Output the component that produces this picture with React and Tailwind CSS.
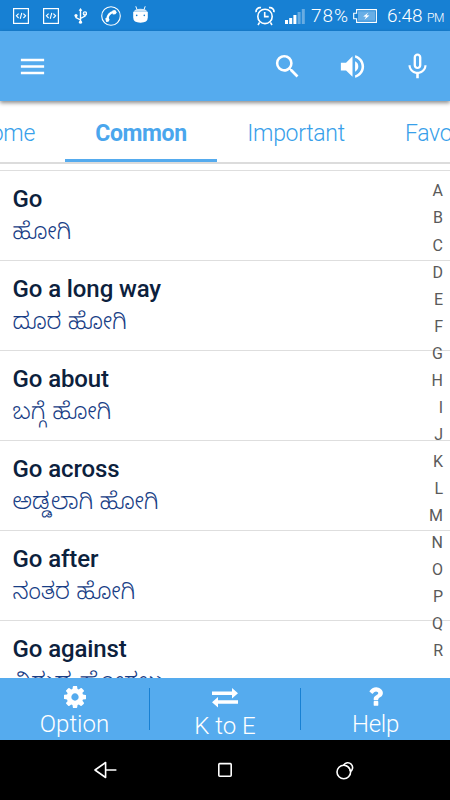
import { MdMenu, MdSearch, MdVolumeUp, MdMicNone } from 'react-icons/md'

const PHRASES = [
  { en: 'Go', kn: 'ಹೋಗಿ' },
  { en: 'Go a long way', kn: 'ದೂರ ಹೋಗಿ' },
  { en: 'Go about', kn: 'ಬಗ್ಗೆ ಹೋಗಿ' },
  { en: 'Go across', kn: 'ಅಡ್ಡಲಾಗಿ ಹೋಗಿ' },
  { en: 'Go after', kn: 'ನಂತರ ಹೋಗಿ' },
  { en: 'Go against', kn: 'ವಿರುದ್ಧ ಹೋಗಲು' },
]

const LETTERS = 'ABCDEFGHIJKLMNOPQR'.split('')

function CodeIcon({ className }) {
  return (
    <svg className={className} width="16" height="16" viewBox="0 0 16 16" fill="none" stroke="currentColor">
      <rect x="0.6" y="0.6" width="14.8" height="14.8" strokeWidth="1.2" />
      <path d="M5.6 5.6 3.4 7.8l2.2 2.2M10.4 5.6l2.2 2.2-2.2 2.2M8.8 4.8 7.2 10.8" strokeWidth="1.1" />
    </svg>
  )
}

function UsbIcon({ className }) {
  return (
    <svg className={className} width="13" height="16" viewBox="0 0 13 16" fill="none" stroke="currentColor" strokeWidth="1.4">
      <path d="M6.5 2v12M6.5 12 2 9.5V7.5M6.5 10.5 11 8V5.5" />
      <circle cx="2" cy="7.6" r="1.6" fill="currentColor" stroke="none" />
      <circle cx="10.9" cy="5.6" r="1.7" strokeWidth="1.1" />
      <circle cx="6.5" cy="14.2" r="1.6" fill="currentColor" stroke="none" />
      <path d="M6.5 0 8.4 2.8H4.6z" fill="currentColor" stroke="none" />
    </svg>
  )
}

function CallIcon({ className }) {
  return (
    <svg className={className} width="20" height="20" viewBox="0 0 20 20" fill="none" stroke="currentColor">
      <circle cx="10" cy="10" r="9.3" strokeWidth="1.1" />
      <path d="M6.2 13.8Q6.5 7.2 13 5.9" strokeWidth="2.2" />
      <path d="M4.2 12.4l3-1.4 1.4 2.7-1.2 2.1-2.2.1zM11.4 4.4l2.8-.3 1.6 2.3-1.4 1.8-2.6.4z" fill="currentColor" stroke="none" />
    </svg>
  )
}

function AndroidIcon({ className }) {
  return (
    <svg className={className} width="15" height="17" viewBox="0 0 15 17">
      <path d="M2.8.3 4 3.6M12.2.3 11 3.6" stroke="currentColor" strokeWidth="1" fill="none" />
      <path d="M.8 5.8Q1.6 2.8 7.5 2.8T14.2 5.8z" fill="currentColor" opacity=".8" />
      <path d="M.2 5.8h14.6v5.8q0 5.2-7.3 5.2T.2 11.6z" fill="currentColor" />
      <circle cx="3.7" cy="9.4" r=".8" fill="#1780d3" />
      <circle cx="11.3" cy="9.4" r=".8" fill="#1780d3" />
    </svg>
  )
}

function AlarmIcon({ className }) {
  return (
    <svg className={className} width="20" height="20" viewBox="0 0 20 20" fill="none" stroke="currentColor" strokeWidth="1.6">
      <circle cx="10" cy="10.4" r="7.2" />
      <path d="M9.7 6v4.6h4M4.6 16.4 3 19M15.4 16.4 17 19" />
      <path d="M1.3 6.2C.3 3.8 3 1 6 1.7M18.7 6.2C19.7 3.8 17 1 14 1.7" strokeWidth="1.7" />
    </svg>
  )
}

function SignalIcon({ className }) {
  return (
    <svg className={className} width="20" height="16" viewBox="0 0 20 16" fill="currentColor">
      <path d="M0 12h3v4H0zM4.2 10h3v6h-3zM8.4 7h3v9h-3z" />
      <path d="M12.6 4h3v12h-3zM16.8 1h3v15h-3z" opacity=".35" />
    </svg>
  )
}

function BatteryIcon({ className }) {
  return (
    <svg className={className} width="24" height="14" viewBox="0 0 24 14">
      <path d="M3.6.6h19.8v12.8H3.6V9.8H.7V4.2h2.9z" fill="none" stroke="currentColor" strokeWidth="1.1" />
      <path d="M5 2.2h17v9.6H5z" fill="#68aee6" />
      <path d="m15.4 3.4-5.2 4 2.8.3-1.6 3.1 5-4.2-2.9-.4z" fill="currentColor" />
    </svg>
  )
}

function StatusBar() {
  return (
    <div className="flex h-[31px] shrink-0 items-center bg-[#1780d3] pr-[7px] pl-[13px] text-white">
      <CodeIcon />
      <CodeIcon className="ml-[14px]" />
      <UsbIcon className="ml-[15px]" />
      <CallIcon className="ml-[14px]" />
      <AndroidIcon className="mb-[2px] ml-[12px]" />
      <AlarmIcon className="ml-auto" />
      <SignalIcon className="mt-px ml-[10px]" />
      <span className="ml-[6px] w-[39px] text-[19px] leading-none font-light tracking-[0.9px] whitespace-nowrap">78%</span>
      <BatteryIcon className="ml-[3px]" />
      <span className="ml-[10px] w-[38px] text-[19px] leading-none font-light whitespace-nowrap">6:48</span>
      <span className="mt-1 ml-[2px] w-[16px] text-[12px] leading-none font-light tracking-[-0.5px]">PM</span>
    </div>
  )
}

function AppBar() {
  return (
    <header className="relative z-10 flex h-[70px] shrink-0 items-center bg-[#55abee] pr-[17px] pl-[17px] text-white shadow-[0_2px_4px_rgba(0,0,0,0.45)]">
      <MdMenu size={31} />
      <MdSearch size={31} className="ml-auto" />
      <MdVolumeUp size={31} className="ml-[34px]" />
      <MdMicNone size={31} className="ml-[34px]" />
    </header>
  )
}

function Tabs() {
  return (
    <nav className="flex h-[63px] shrink-0 overflow-hidden border-b-2 border-[#dcdcdc] text-[23px] font-light whitespace-nowrap text-[#38a0ea]">
      <div className="flex w-[65px] shrink-0 justify-end pt-[19px] pr-[30px] leading-[28px] tracking-[-0.3px]">Home</div>
      <div className="-mb-px h-[62px] w-[152px] shrink-0 border-b-4 border-[#55abee] pt-[19px] text-center leading-[28px] font-bold tracking-[-0.4px] text-[#4aa6ed]">
        Common
      </div>
      <div className="w-[158px] shrink-0 pt-[19px] text-center leading-[28px] tracking-[-0.3px]">Important</div>
      <div className="shrink-0 pt-[19px] pl-[30px] leading-[28px] tracking-[-0.3px]">Favourite</div>
    </nav>
  )
}

function PhraseRow({ en, kn }) {
  return (
    <li className="h-[90px] shrink-0 border-t border-[#dedede] pt-[13px] pl-[12.5px]">
      <div className="text-[24px] leading-[30px] font-medium tracking-[-0.1px] text-[#0c213d]">{en}</div>
      <div className="mt-[6px] font-['Noto_Sans_Kannada','Noto_Sans',sans-serif] text-[23.4px] leading-[32px] font-light whitespace-nowrap text-[#173d85]">
        {kn}
      </div>
    </li>
  )
}

function PhraseList() {
  return (
    <main className="relative min-h-0 flex-1 overflow-hidden pt-[6px]">
      <ul className="flex flex-col">
        {PHRASES.map((p) => (
          <PhraseRow key={p.en} {...p} />
        ))}
      </ul>
      <div className="absolute top-[13.4px] right-[7px] flex flex-col text-right text-[16px] leading-[27.06px] text-[#5a5a5a]">
        {LETTERS.map((l) => (
          <span key={l}>{l}</span>
        ))}
      </div>
    </main>
  )
}

function GearIcon({ className }) {
  return (
    <svg className={className} width="22" height="22" viewBox="0 128 1536 1536" fill="currentColor">
      <path d="M1024 896q0-106-75-181t-181-75-181 75-75 181 75 181 181 75 181-75 75-181zm512-109v222q0 12-8 23t-20 13l-185 28q-19 54-39 91 35 50 107 138 10 12 10 25t-9 23q-27 37-99 108t-94 71q-12 0-26-9l-138-108q-44 23-91 38-16 136-29 186-7 28-36 28h-222q-14 0-24.5-8.5t-11.5-21.5l-28-184q-49-16-90-37l-141 107q-10 9-25 9-14 0-25-11-126-114-165-168-7-10-7-23 0-12 8-23 15-21 51-66.5t54-70.5q-27-50-41-99l-183-27q-13-2-21-12.5t-8-23.5v-222q0-12 8-23t19-13l186-28q14-46 39-92-40-57-107-138-10-12-10-24 0-10 9-23 26-36 98.5-107.5t94.5-71.5q13 0 26 10l138 107q44-23 91-38 16-136 29-186 7-28 36-28h222q14 0 24.5 8.5t11.5 21.5l28 184q49 16 90 37l142-107q9-9 24-9 13 0 25 10 129 119 165 170 7 8 7 22 0 12-8 23-15 21-51 66.5t-54 70.5q26 50 41 98l183 28q13 2 21 12.5t8 23.5z" />
    </svg>
  )
}

function SwapIcon({ className }) {
  return (
    <svg className={className} width="26" height="20" viewBox="0 0 26 20" fill="currentColor">
      <path d="M0 3.5h20V0l6 5.2-6 5.2V7H0zM26 12.3H6V9L0 14.2l6 5.2v-3.6h20z" />
    </svg>
  )
}

function QuestionIcon({ className }) {
  return (
    <svg className={className} width="14" height="19" viewBox="60 256 970 1280" fill="currentColor">
      <path d="M704 1256v240q0 16-12 28t-28 12h-240q-16 0-28-12t-12-28v-240q0-16 12-28t28-12h240q16 0 28 12t12 28zM1020 656q0 54-15.5 101t-35 76.5-55 59.5-57.5 43.5-61 35.5q-41 23-68.5 65t-27.5 67q0 17-12 32.5t-28 15.5h-240q-15 0-25.5-18.5t-10.5-37.5v-45q0-83 65-156.5t143-108.5q59-27 84-56t25-76q0-42-46.5-74t-107.5-32q-65 0-108 29-35 25-107 115-13 16-31 16-12 0-25-8l-164-125q-13-10-15.5-25t5.5-28q160-266 464-266 80 0 161 31t146 83 106 127.5 41 158.5z" />
    </svg>
  )
}

function BottomBar() {
  return (
    <footer className="flex h-[62px] shrink-0 bg-[#55abee] text-[24px] leading-[28px] font-light text-white">
      <button className="flex w-[149px] flex-col items-center pt-[8px]">
        <GearIcon />
        <span className="mt-[2px]">Option</span>
      </button>
      <div className="my-[10px] w-px bg-[#1780d3]" />
      <button className="flex w-[150px] flex-col items-center pt-[10px]">
        <SwapIcon />
        <span className="mt-[4px]">K to E</span>
      </button>
      <div className="my-[10px] w-px bg-[#1780d3]" />
      <button className="flex flex-1 flex-col items-center pt-[9px]">
        <QuestionIcon />
        <span className="mt-[4px] tracking-[-0.3px]">Help</span>
      </button>
    </footer>
  )
}

function NavBar() {
  return (
    <div className="flex h-[60px] shrink-0 items-center bg-black pl-[93px] text-white">
      <svg width="24" height="20" viewBox="0 0 24 20" fill="none" stroke="currentColor" strokeWidth="1.6">
        <path d="M12.6 2.5v15L2 10zM12.6 10h10.8" strokeLinejoin="round" />
      </svg>
      <svg className="ml-[100px]" width="16" height="16" viewBox="0 0 16 16" fill="none" stroke="currentColor" strokeWidth="1.6">
        <rect x="1.8" y="1.6" width="12.4" height="12.6" rx="1" />
      </svg>
      <svg className="ml-[102px]" width="20" height="20" viewBox="0 0 20 20" fill="none" stroke="currentColor" strokeWidth="1.6">
        <circle cx="8.8" cy="12" r="6.8" />
        <path d="M8.6 5.2a4.8 4.8 0 1 1 6.4 6.6" />
        <path d="M10.5 5.5q4 1.5 4.6 5.5" strokeWidth="1.2" />
      </svg>
    </div>
  )
}

export default function App() {
  return (
    <div className="flex h-[800px] w-[450px] flex-col overflow-hidden bg-white font-[Roboto,sans-serif]">
      <StatusBar />
      <AppBar />
      <Tabs />
      <PhraseList />
      <BottomBar />
      <NavBar />
    </div>
  )
}
